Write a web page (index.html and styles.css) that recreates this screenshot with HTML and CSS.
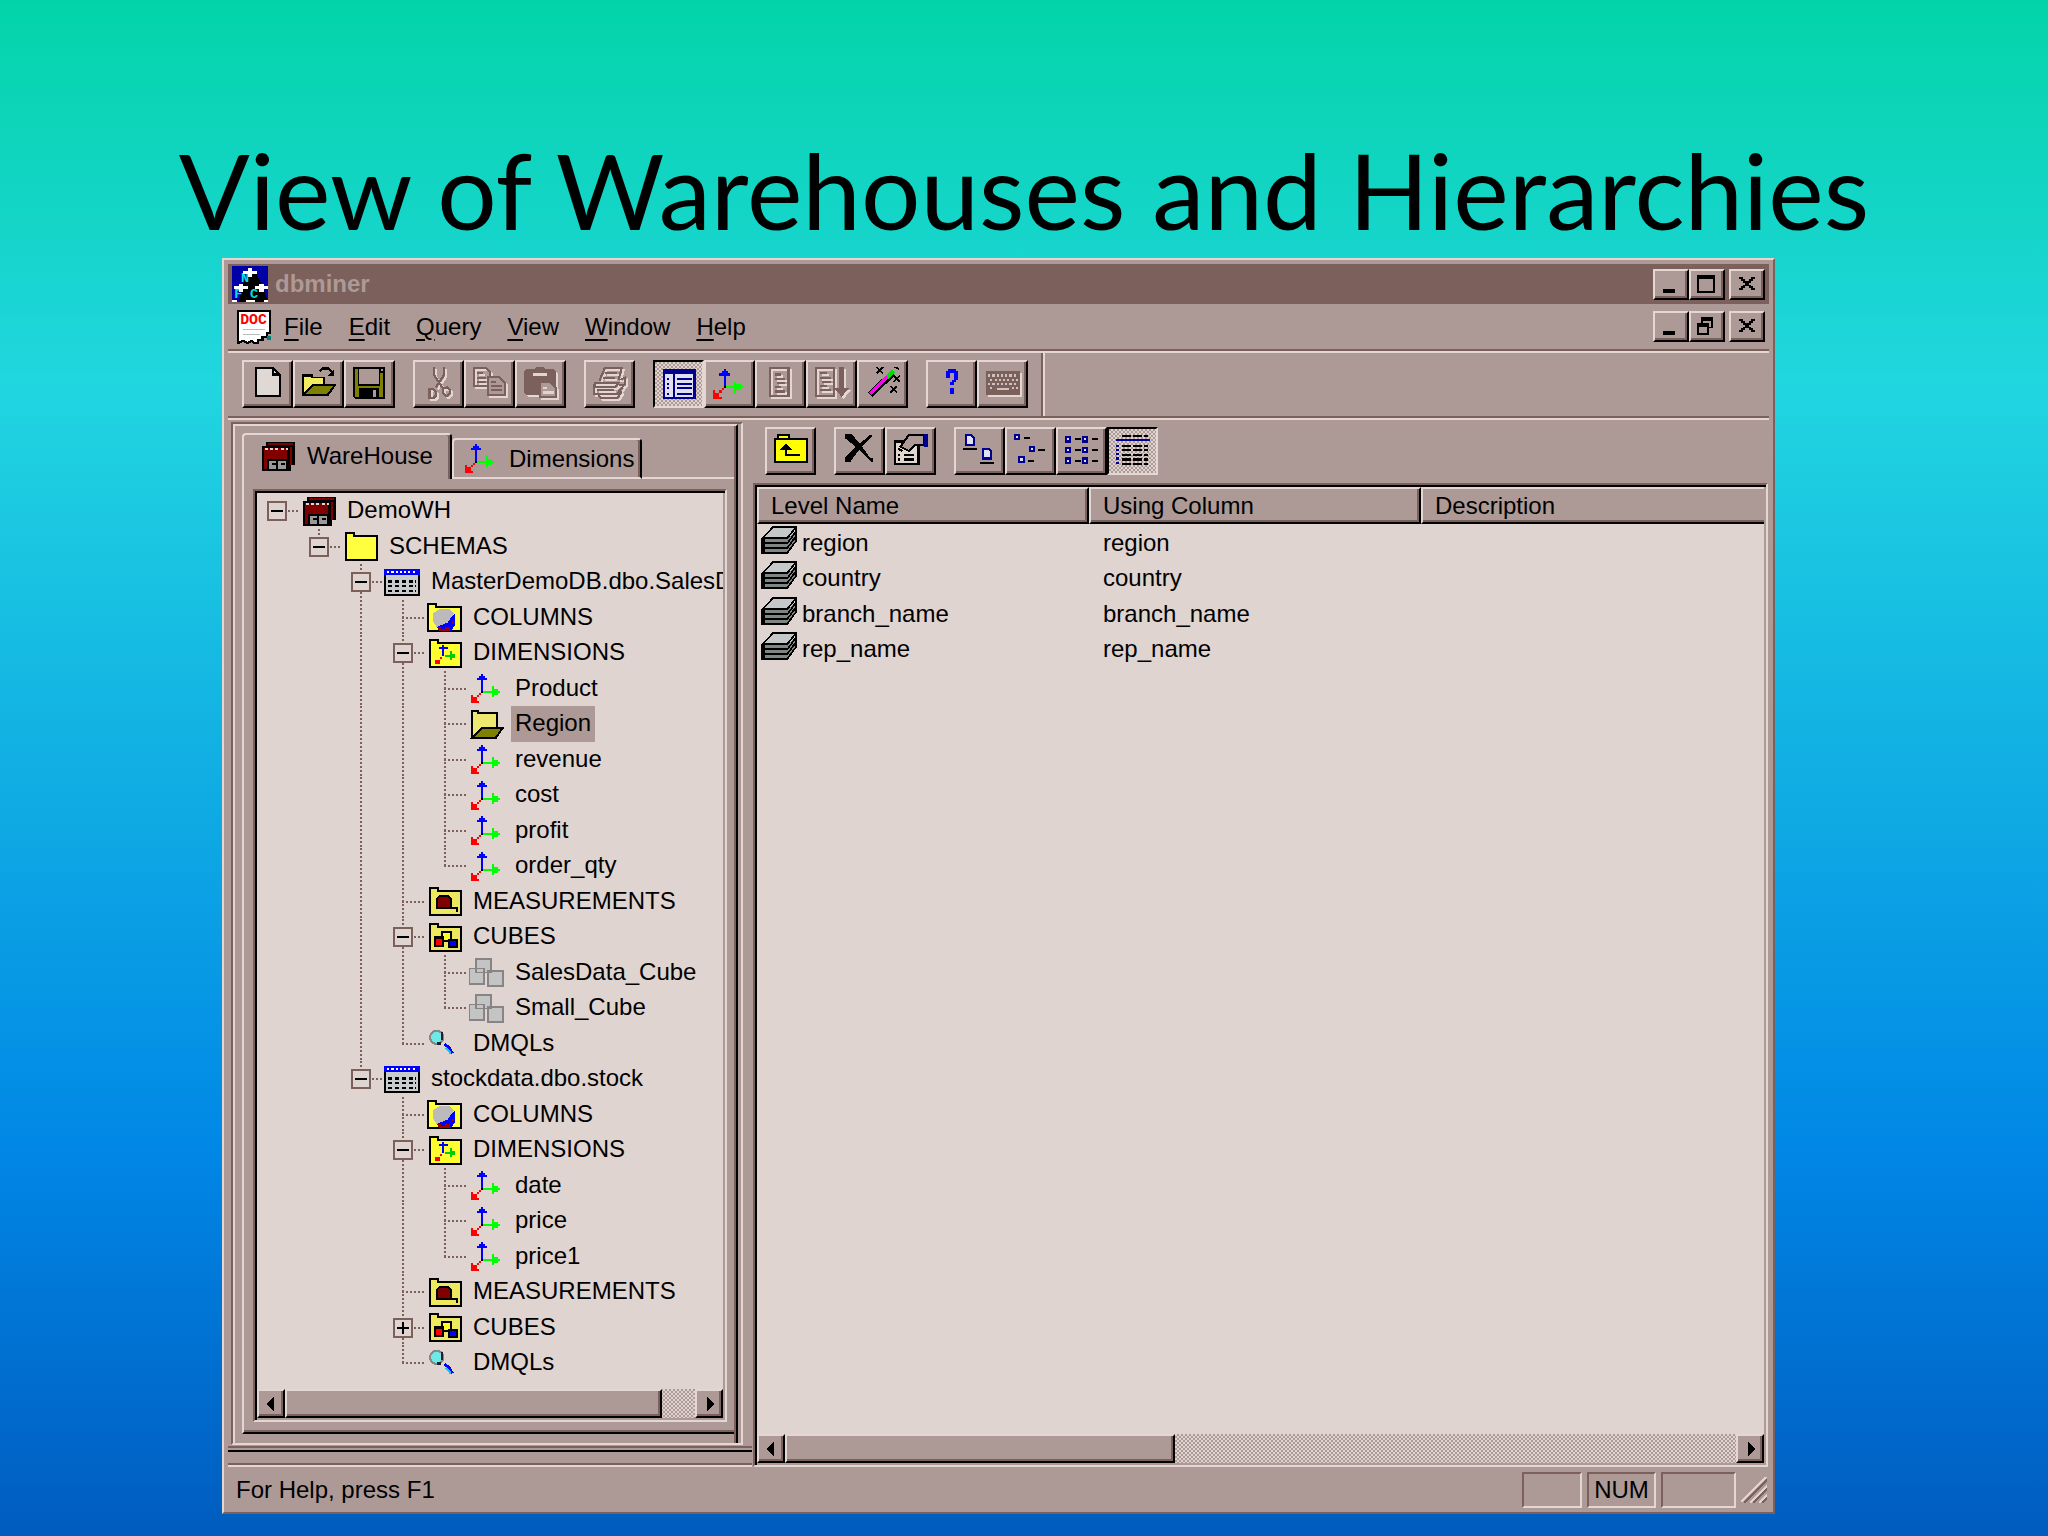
FILE: index.html
```html
<!DOCTYPE html>
<html lang="en">
<head>
<meta charset="utf-8">
<title>View of Warehouses and Hierarchies</title>
<link rel="stylesheet" href="styles.css">
</head>
<body>
<svg class="defs" aria-hidden="true">
  <symbol id="axes" viewBox="0 0 16 14" preserveAspectRatio="xMaxYMid"><path fill="#00f" d="M5 2h1v6H5zM4 1h3v1H4zM3 2h5v1H3zM5 0h1v1H5z"/><path fill="#0f0" d="M6 8h4v1H6zM10 6h1v5h-1zM11 7h2v3h-2zM13 8h1v1h-1z"/><path fill="#f00" d="M4 9h1v1H4zM3 10h1v1H3zM2 11h1v1H2zM0 10h1v3h3v1H0zM1 11h1v2H1zM2 12h1v1H2z"/><path d="M5 8h1v1H5z"/></symbol>
  <symbol id="house" viewBox="0 0 16 14" preserveAspectRatio="xMaxYMid"><path d="M2 0h14v11h-2v3H0V2h2z"/><path fill="#800000" d="M3 .7h12v.6H3zM1 3h11v5H1zM1 8h1.500v5H1zM13.500 2.500h1V11h-1z"/><path stroke="#e0d4d0" stroke-dasharray="1.500 1" d="M1.500 3.500h11"/><path fill="#999" d="M3.500 9h3.500v4H3.500zM8 9h3.500v4H8z"/><path d="M5 10h2v1H5zM9 10h2v1H9z"/></symbol>
  <symbol id="folder" viewBox="0 0 16 14" preserveAspectRatio="xMaxYMid"><path d="M.5 13.500V.5h4v1.500h11v11.500z" fill="#ffff40" stroke="#000"/></symbol>
  <symbol id="table" viewBox="0 0 17 13" preserveAspectRatio="xMaxYMid"><path d="M.5 1v11.500h16V1z" fill="#c8cccc" stroke="#000"/><path fill="#00f" d="M0 0h17v3H0z"/><path stroke="#fff" stroke-dasharray="1 1" d="M1.500 1.500h14"/><path stroke="#000" stroke-dasharray="2 1.200" d="M2 6h13M2 8.300h13M2 10.600h13"/></symbol>
  <symbol id="columns" viewBox="0 0 17 14" preserveAspectRatio="xMaxYMid"><path d="M.5 13.500V.5h4v1.500h12v11.500z" fill="#ffff40" stroke="#000"/><path fill="#bbb" d="M3 5l3-2h5l2 2-1 3-3 3-4 1-2-3z"/><path fill="#00f" d="M13.500 5v6l-2 2.500H6l-1-2 5-2 2-3z"/><path fill="#900" d="M5 11.500h2v1h2v-1h2v2H6zM12 9h1v1h-1z"/></symbol>
  <symbol id="dims" viewBox="0 0 16 14" preserveAspectRatio="xMaxYMid"><path d="M.5 13.500V.5h4v1.500h11v11.500z" fill="#ffff30" stroke="#000"/><path fill="#00f" d="M6.500 3h1v5h-1zM5 4h4v1H5z"/><path fill="#0c0" d="M8 7.500h3v1H8zM10 6h1v4h-1zM11 7h1.500v2H11z"/><path fill="#f00" d="M5.500 8.500h1v1h-1zM3 10h2.500v2H3z"/></symbol>
  <symbol id="measures" viewBox="0 0 16 14" preserveAspectRatio="xMaxYMid"><path d="M.5 13.500V.5h4v1.500h11v11.500z" fill="#ede860" stroke="#000"/><path fill="#800000" stroke="#000" d="M4 10V5.500l1-1h4.500l1 1V10z"/><path fill="none" stroke="#000" d="M4 10.300h9.500v1.700"/></symbol>
  <symbol id="cubes" viewBox="0 0 16 14" preserveAspectRatio="xMaxYMid"><path d="M.5 13.500V.5h4v1.500h11v11.500z" fill="#ede860" stroke="#000"/><g stroke="#000"><path fill="#ffff20" d="M6.500 4.500h4v4h-4z"/><path fill="#f00" d="M3 7h4v4H3z"/><path fill="#00f" d="M9.500 8h4v3.500h-4z"/></g></symbol>
  <symbol id="cube" viewBox="0 0 16 13" preserveAspectRatio="xMaxYMid"><g fill="#c4c4c4" stroke="#868484" stroke-width=".8"><path d="M3.500.5h6.500v6H3.500zM.5 4.700h6.600v7H.5zM8.800 5.800h6.700v6.700H8.800z"/></g></symbol>
  <symbol id="query" viewBox="0 0 16 14" preserveAspectRatio="xMaxYMid"><circle cx="3.800" cy="4" r="3.200" fill="#70e8e8" stroke="#888"/><path fill="#222" d="M6 1.500h1v4H6zM4 6.500h2v1H4z"/><path stroke="#00f" stroke-width="1.500" fill="none" d="M7.500 7.500l2 1.300 1.800 3"/><path stroke="#0cf" fill="none" d="M8 9l2 2v1"/></symbol>
  <symbol id="openfolder" viewBox="0 0 16 14" preserveAspectRatio="xMaxYMid"><path fill="#ede870" stroke="#000" d="M.5 13.500V.5h3v1h9v7H6L2 13"/><path fill="#808000" stroke="#000" d="M.5 13.500L5.500 8.500h10l-3.500 5z"/></symbol>
  <symbol id="stack" viewBox="0 0 17 13"><path fill="#808684" d="M.5 6h12l4-4v5l-4 5.500H.5z"/><path fill="#c4c8c8" stroke="#000" stroke-width=".8" d="M1 5.500L5.500.5h11L12.500 5.500z"/><path fill="none" stroke="#000" stroke-width=".8" d="M.5 5.500v7M0 8h12.500l4-5.500M0 10.200h12.500l4-5.500M0 12.500h12.500l4-5.500V.5M1.500 5v7"/></symbol>
  <symbol id="min" viewBox="0 0 16 14"><path d="M4 9.500h6v2H4z"/></symbol>
  <symbol id="max" viewBox="0 0 16 14"><path d="M3 2h9v9.500H3zM4 4v6.500h7V4z" fill-rule="evenodd"/></symbol>
  <symbol id="restore" viewBox="0 0 16 14"><path d="M5 2h6v6H9V7h1V4H6v1H5zM3 5h6v6.500H3zM4 7v3.500h4V7z" fill-rule="evenodd"/></symbol>
  <symbol id="close" viewBox="0 0 16 14"><path d="M4 3h2v1h1v1h2V4h1V3h2v1h-1v1h-1v1H9v1h1v1h1v1h1v1h-2V9H9V8H7v1H6v1H4V9h1V8h1V7h1V6H6V5H5V4H4z"/></symbol>
</svg>
<main class="slide">
  <h1 class="headline">View of Warehouses and Hierarchies</h1>
  <section class="window" aria-label="dbminer">
    <header class="titlebar">
      <svg class="app-icon" viewBox="0 0 16 16"><path fill="#0000a8" d="M0 0h16v16H0z"/><path d="M7 2h3l2 4 2 4 2 6H3l1-5 1-3z"/><g class="app-letters"><text x="4" y="7">N</text><text x="1" y="14">F</text><text x="8" y="14">C</text></g><path fill="#fff" d="M7 1h2v1h2v1.500H9V5H7V3.500H5V2h2zM3 8h2v1h2v1H5v1.500H3V10H1V9h2zM12 8h2v1h2v1h-2v1.500h-2V10h-2V9h2zM0 15h2v1H0zM6 15h4v1H6zM14 15h2v1h-2z"/></svg>
      <span class="caption">dbminer</span>
      <div class="controls">
        <button class="btn" aria-label="Minimize"><svg><use href="#min"/></svg></button><button class="btn" aria-label="Maximize"><svg><use href="#max"/></svg></button><button class="btn apart" aria-label="Close"><svg><use href="#close"/></svg></button>
      </div>
    </header>
    <nav class="menubar">
      <svg class="doc-icon" viewBox="0 0 16 16"><path fill="#fff" stroke="#000" d="M.5 15.500V.5h15V11H14v1.500h-2V14h-2v1.500H8l-1-1-2 1-2-1z"/><path fill="#008080" d="M14 12h2v2h-2z"/><path stroke="#bbb" stroke-width=".5" d="M3 9h10M3 11.500h8"/><text x="1.500" y="6.500">DOC</text></svg>
      <button><u>F</u>ile</button><button><u>E</u>dit</button><button><u>Q</u>uery</button><button><u>V</u>iew</button><button><u>W</u>indow</button><button><u>H</u>elp</button>
      <div class="controls">
        <button class="btn" aria-label="Minimize document"><svg><use href="#min"/></svg></button><button class="btn" aria-label="Restore document"><svg><use href="#restore"/></svg></button><button class="btn apart" aria-label="Close document"><svg><use href="#close"/></svg></button>
      </div>
    </nav>
    <div class="toolbar main-tools">
      <div class="group">
        <button class="btn" aria-label="New"><svg viewBox="0 0 16 16"><path fill="#e0d8d4" stroke="#000" d="M2.500.5h8l3 3v10h-11z"/><path fill="none" stroke="#000" d="M10.500.5v3h3"/></svg></button>
        <button class="btn" aria-label="Open"><svg viewBox="0 0 16 16"><path fill="#f4ec60" stroke="#000" d="M.5 13V4h4v1h6v3"/><path fill="#f4ec60" d="M1 5h9v3H5l-4 4z"/><path fill="#808000" stroke="#000" d="M.5 13.300L5 8.500h10.500L12 13.300z"/><path fill="none" stroke="#000" d="M8.500 2l1-1.300h3L14 2.500"/><path d="M15 1v3h-3z"/></svg></button>
        <button class="btn" aria-label="Save"><svg viewBox="0 0 16 16"><path d="M0 0h15v15H1l-1-1z"/><path fill="#808000" d="M1 1h1.500v8h10V3H14v11H1z"/><path fill="#ad9a96" d="M3 1h9v7H3z"/><path d="M3 10h9v4.500H3z"/><path fill="#ad9a96" d="M9.500 11H11v3H9.500zM13 1h1v1h-1z"/></svg></button>
      </div>
      <div class="group">
        <button class="btn off" aria-label="Cut"><svg viewBox="0 0 16 16"><path fill="none" stroke="#7b605b" d="M5.500 0v3.500l4 6M10.500 0v3.500l-4 6M3.500 10.500h2l1 1v2l-1 1h-2zM10 10l2-.5 1 1v2l-1 1h-1l-1-1z"/></svg></button>
        <button class="btn off" aria-label="Copy"><svg viewBox="0 0 16 16"><path fill="none" stroke="#7b605b" d="M.5.500h5.500l2 2v6.500H.5zM2 3h2.500M2 5h4M2 7h4"/><path fill="#ad9a96" stroke="#7b605b" d="M7 4.500h5l3 3V13H7z"/><path fill="none" stroke="#7b605b" d="M8.500 7h2.500M8.500 9h5M8.500 11h5"/></svg></button>
        <button class="btn off" aria-label="Paste"><svg viewBox="0 0 16 16"><path fill="#7b605b" d="M0 2l1-1h4l1-1h3l1 1h4l1 1v11H1l-1-1z"/><path fill="#ad9a96" stroke="#7b605b" d="M7.500 7h4.500l3 3v4H7.500z"/><path stroke="#e0d4d0" d="M4 3.500h7M9 10h2M9 12h5"/></svg></button>
      </div>
      <div class="group">
        <button class="btn off" aria-label="Print"><svg viewBox="0 0 16 16"><path fill="none" stroke="#7b605b" d="M3 6.500L5.500.500h8l-1.500 5.500M5.500 3h6M4.500 5h6M1 7.500h11l-1.500 2H1zM.5 8v4.500h11L15 8V5l-2 1M2.500 13l1 1.500h8l2-3M2 11h8M12 8.500h3"/></svg></button>
      </div>
      <div class="group">
        <button class="btn on" aria-label="Warehouse view" aria-pressed="true"><svg viewBox="0 0 16 16"><path fill="#e0e0f0" stroke="#000090" d="M.8 1.500h14.500v13H.8z"/><path fill="#000090" d="M1 1h14v2.500H1zM5 3h1v11H5z"/><path stroke="#000090" d="M7 5.500h7M7 8h7M7 10h7M7 12.500h7M2.500 5.500h1M2.500 8h1M2.500 10h1M2.500 12.500h1"/></svg></button>
        <button class="btn" aria-label="Dimensions"><svg><use href="#axes"/></svg></button>
        <button class="btn off" aria-label="Report"><svg viewBox="0 0 16 16"><path fill="none" stroke="#7b605b" d="M3 .5h8.500v13H3zM5 3.500h3M5 5.500h5M6 7.500h4M5 9.500h3M5 11.500h5"/></svg></button>
        <button class="btn off" aria-label="Sort"><svg viewBox="0 0 16 16"><path fill="none" stroke="#7b605b" d="M.5.500h8.500v13H.5zM2.500 3h3M2.500 5h5M3.500 7h4M2.500 9h3M2.500 11h5"/><path fill="#7b605b" d="M11.500 0h2v10h2.500L12.500 14 9 10h2.500z"/></svg></button>
        <button class="btn" aria-label="Wizard"><svg viewBox="0 0 16 16"><path stroke="#000" stroke-width="3" d="M2 13L12.500 3"/><path stroke="#f0f" stroke-width="1.600" d="M2 12.700L10 4.500"/><path stroke="#0d0" stroke-width="2" d="M10 4.800L13 2"/><path stroke="#000" stroke-width=".8" d="M5 0l3 3M8 0L5 3M13 4l3 3M16 4l-3 3M11.500 9l3 3M14.500 9l-3 3M13.500 0l2 1"/></svg></button>
      </div>
      <div class="group">
        <button class="btn" aria-label="Help"><svg viewBox="0 0 16 16"><path fill="#00f" d="M5 2h1V1h4v1h1v4h-1v1H9v1.500H7V7h1V6h1V3H7v2H5zM7 10h2v2.500H7z"/></svg></button>
        <button class="btn off" aria-label="Keyboard"><svg viewBox="0 0 16 16"><path fill="#7b605b" d="M0 2h16v11H0z"/><path stroke="#cfc2be" stroke-dasharray="1 1" d="M1 4h14M2 6h13M1 8h14M2 10h2M12 10h3"/><path stroke="#cfc2be" d="M5 10.500h6"/></svg></button>
      </div>
      <div class="divider"></div>
    </div>
    <div class="body">
      <aside class="dock">
        <div class="dock-edge"><div class="dock-inner">
          <div class="tabs" role="tablist">
            <button class="tab active" role="tab" aria-selected="true"><svg><use href="#house"/></svg>WareHouse</button>
            <button class="tab" role="tab" aria-selected="false"><svg><use href="#axes"/></svg>Dimensions</button>
            <span class="tab-rest"></span>
          </div>
          <div class="page">
            <div class="well">
              <ul class="tree">
                <li><i class="g h"><button class="exp" aria-label="Collapse"></button></i><svg><use href="#house"/></svg><span>DemoWH</span></li>
                <li><i class="g"></i><i class="g l"><button class="exp" aria-label="Collapse"></button></i><svg><use href="#folder"/></svg><span>SCHEMAS</span></li>
                <li><i class="g"></i><i class="g"></i><i class="g t"><button class="exp" aria-label="Collapse"></button></i><svg><use href="#table"/></svg><span>MasterDemoDB.dbo.SalesD</span></li>
                <li><i class="g"></i><i class="g"></i><i class="g v"></i><i class="g t"></i><svg><use href="#columns"/></svg><span>COLUMNS</span></li>
                <li><i class="g"></i><i class="g"></i><i class="g v"></i><i class="g t"><button class="exp" aria-label="Collapse"></button></i><svg><use href="#dims"/></svg><span>DIMENSIONS</span></li>
                <li><i class="g"></i><i class="g"></i><i class="g v"></i><i class="g v"></i><i class="g t"></i><svg><use href="#axes"/></svg><span>Product</span></li>
                <li><i class="g"></i><i class="g"></i><i class="g v"></i><i class="g v"></i><i class="g t"></i><svg><use href="#openfolder"/></svg><span class="selected">Region</span></li>
                <li><i class="g"></i><i class="g"></i><i class="g v"></i><i class="g v"></i><i class="g t"></i><svg><use href="#axes"/></svg><span>revenue</span></li>
                <li><i class="g"></i><i class="g"></i><i class="g v"></i><i class="g v"></i><i class="g t"></i><svg><use href="#axes"/></svg><span>cost</span></li>
                <li><i class="g"></i><i class="g"></i><i class="g v"></i><i class="g v"></i><i class="g t"></i><svg><use href="#axes"/></svg><span>profit</span></li>
                <li><i class="g"></i><i class="g"></i><i class="g v"></i><i class="g v"></i><i class="g l"></i><svg><use href="#axes"/></svg><span>order_qty</span></li>
                <li><i class="g"></i><i class="g"></i><i class="g v"></i><i class="g t"></i><svg><use href="#measures"/></svg><span>MEASUREMENTS</span></li>
                <li><i class="g"></i><i class="g"></i><i class="g v"></i><i class="g t"><button class="exp" aria-label="Collapse"></button></i><svg><use href="#cubes"/></svg><span>CUBES</span></li>
                <li><i class="g"></i><i class="g"></i><i class="g v"></i><i class="g v"></i><i class="g t"></i><svg><use href="#cube"/></svg><span>SalesData_Cube</span></li>
                <li><i class="g"></i><i class="g"></i><i class="g v"></i><i class="g v"></i><i class="g l"></i><svg><use href="#cube"/></svg><span>Small_Cube</span></li>
                <li><i class="g"></i><i class="g"></i><i class="g v"></i><i class="g l"></i><svg><use href="#query"/></svg><span>DMQLs</span></li>
                <li><i class="g"></i><i class="g"></i><i class="g l"><button class="exp" aria-label="Collapse"></button></i><svg><use href="#table"/></svg><span>stockdata.dbo.stock</span></li>
                <li><i class="g"></i><i class="g"></i><i class="g"></i><i class="g t"></i><svg><use href="#columns"/></svg><span>COLUMNS</span></li>
                <li><i class="g"></i><i class="g"></i><i class="g"></i><i class="g t"><button class="exp" aria-label="Collapse"></button></i><svg><use href="#dims"/></svg><span>DIMENSIONS</span></li>
                <li><i class="g"></i><i class="g"></i><i class="g"></i><i class="g v"></i><i class="g t"></i><svg><use href="#axes"/></svg><span>date</span></li>
                <li><i class="g"></i><i class="g"></i><i class="g"></i><i class="g v"></i><i class="g t"></i><svg><use href="#axes"/></svg><span>price</span></li>
                <li><i class="g"></i><i class="g"></i><i class="g"></i><i class="g v"></i><i class="g l"></i><svg><use href="#axes"/></svg><span>price1</span></li>
                <li><i class="g"></i><i class="g"></i><i class="g"></i><i class="g t"></i><svg><use href="#measures"/></svg><span>MEASUREMENTS</span></li>
                <li><i class="g"></i><i class="g"></i><i class="g"></i><i class="g t"><button class="exp plus" aria-label="Expand"></button></i><svg><use href="#cubes"/></svg><span>CUBES</span></li>
                <li><i class="g"></i><i class="g"></i><i class="g"></i><i class="g l"></i><svg><use href="#query"/></svg><span>DMQLs</span></li>
              </ul>
              <div class="scroll">
                <button class="btn" aria-label="Scroll left"><svg viewBox="0 0 8 8"><path d="M5 1v6L2 4z"/></svg></button>
                <div class="track"><div class="btn thumb tree-thumb"></div></div>
                <button class="btn" aria-label="Scroll right"><svg viewBox="0 0 8 8"><path d="M3 1v6l3-3z"/></svg></button>
              </div>
            </div>
          </div>
        </div></div>
      </aside>
      <section class="content">
        <div class="toolbar list-tools">
          <div class="group">
            <button class="btn" aria-label="Up one level"><svg viewBox="0 0 16 16"><path fill="#ff0" stroke="#000" d="M.5 13V2.500h1.500v-2h5v2h8.500V13z"/><path fill="none" stroke="#000" stroke-width=".8" d="M2 2.500h5"/><path d="M5.500 4.500L8.500 7.500h-6z"/><path fill="none" stroke="#000" d="M5.500 6v4h6.500"/></svg></button>
          </div>
          <div class="group">
            <button class="btn" aria-label="Delete"><svg viewBox="0 0 16 16"><path d="M1 0h3l4 4.500L12.500.500h1v1L9 6l4 5.500h1v1.500h-1L7.500 7.500 3.500 13H1v-2l5-5-5-4z"/></svg></button>
            <button class="btn" aria-label="Properties"><svg viewBox="0 0 16 16"><path fill="#e0d8d0" stroke="#000" d="M.5 3.500h11V14H.5z"/><path fill="#ad9a96" stroke="#000" d="M3 6l4-5.500h7v4.500h-4L7 8z"/><path fill="#000090" d="M14 0h2v6h-2z"/><path stroke="#000" d="M2 10h1M2 12h1M4.500 10h5M4.500 12h5M2 7l2 1"/></svg></button>
          </div>
          <div class="group">
            <button class="btn" aria-label="Large icons"><svg viewBox="0 0 16 16"><path fill="#e0e0f0" stroke="#000090" d="M1.500.5H4l1 1V5H1.500zM9.500 7H12l1 1v3.500H9.500z"/><path stroke="#000" d="M0 7h6.500M8 13.500h6.500"/></svg></button>
            <button class="btn" aria-label="Small icons"><svg viewBox="0 0 16 16"><path fill="#e0e0f0" stroke="#000090" d="M.5.500h2v2h-2zM7.500 6h2v2h-2zM2.500 11h2v2h-2z"/><path stroke="#000" d="M4.500 2h3M11.500 7.500h3M6.500 12.500h3"/></svg></button>
            <button class="btn" aria-label="List"><svg viewBox="0 0 16 16"><path fill="#e0e0f0" stroke="#000090" d="M.5 1.500h2v2h-2zM.5 6.500h2v2h-2zM.5 11.500h2v2h-2zM8.500 1.500h2v2h-2zM8.500 6.500h2v2h-2zM8.500 11.500h2v2h-2z"/><path stroke="#000" d="M4.500 2.500h3M4.500 7.500h3M4.500 12.500h3M12.500 2.500h3M12.500 7.500h3M12.500 12.500h3"/></svg></button>
            <button class="btn on" aria-label="Details" aria-pressed="true"><svg viewBox="0 0 16 16"><path stroke="#000" stroke-dasharray="4 1" d="M3 1h12M3 5.500h12M3 7.700h12M3 9.800h12M3 12h12M3 14h12"/><path stroke="#000090" stroke-width="1" d="M0 3h16"/><path stroke="#000090" stroke-width="1.500" stroke-dasharray="1 1" d="M.8 5v9"/></svg></button>
          </div>
        </div>
        <div class="list">
          <div class="list-body">
            <table>
              <thead><tr><th class="name">Level Name</th><th class="using">Using Column</th><th>Description</th></tr></thead>
              <tbody>
                <tr><td><svg><use href="#stack"/></svg>region</td><td>region</td><td></td></tr>
                <tr><td><svg><use href="#stack"/></svg>country</td><td>country</td><td></td></tr>
                <tr><td><svg><use href="#stack"/></svg>branch_name</td><td>branch_name</td><td></td></tr>
                <tr><td><svg><use href="#stack"/></svg>rep_name</td><td>rep_name</td><td></td></tr>
              </tbody>
            </table>
          </div>
          <div class="scroll">
            <button class="btn" aria-label="Scroll left"><svg viewBox="0 0 8 8"><path d="M5 1v6L2 4z"/></svg></button>
            <div class="track"><div class="btn thumb list-thumb"></div></div>
            <button class="btn" aria-label="Scroll right"><svg viewBox="0 0 8 8"><path d="M3 1v6l3-3z"/></svg></button>
          </div>
        </div>
      </section>
    </div>
    <footer class="status">
      <span class="hint">For Help, press F1</span>
      <span class="cell caps"></span><span class="cell num">NUM</span><span class="cell scrl"></span>
      <svg class="grip" viewBox="0 0 26 26"><g stroke-width="2"><path stroke="#e0d4d0" d="M0 25L25 0M9 26L26 9M18 26l8-8"/><path stroke="#7b605b" d="M3 26L26 3M12 26l14-14M21 26l5-5"/></g></svg>
    </footer>
  </section>
</main>
</body>
</html>
```
FILE: styles.css
```css
:root {
  --face: #ad9a96;
  --light: #e4d6d3;
  --dark: #7b605b;
  --paper: #e0d4d0;
  --dither: repeating-conic-gradient(#e0d4d0 0 25%, #ad9a96 0 50%) 0 0 / 4px 4px;
}
*, *::after { box-sizing: border-box; }
body { margin: 0; font: 24px/34px "Liberation Sans", Arial, sans-serif; color: #000; }
button { font: inherit; color: inherit; background: none; border: 0; padding: 0; }
svg { display: block; flex: none; shape-rendering: crispEdges; }
.defs { position: absolute; width: 0; height: 0; }

.slide {
  min-height: 100vh; display: flex; flex-direction: column; padding: 0 273px 22px 222px;
  background: linear-gradient(#03d4a8, #21d6e0 25%, #0087e6 75%, #005cbf);
}
.headline {
  margin: 0 -273px 0 -222px; padding-top: 124px; height: 258px; text-align: center; white-space: nowrap;
  font: 400 105px/130px Lato, sans-serif;
}
.window {
  flex: 1; display: flex; flex-direction: column; background: var(--face);
  border: 2px solid; border-color: var(--light) var(--dark) var(--dark) var(--light); padding: 4px 4px 0;
}

.btn {
  display: flex; align-items: center; justify-content: center; background: var(--face);
  border: 2px solid; border-color: var(--light) #000 #000 var(--light);
  box-shadow: inset -2px -2px 0 var(--dark);
}
.btn.on { background: var(--dither); border-color: #000 var(--light) var(--light) #000; box-shadow: none; }
.btn.off svg { filter: drop-shadow(2px 2px 0 var(--light)); }

.titlebar, .menubar { display: flex; align-items: center; flex: none; }
.titlebar { height: 40px; background: #7c605b; padding: 0 4px; }
.app-icon { width: 36px; height: 36px; }
.app-letters { font: bold 6px "Liberation Mono", monospace; fill: #00e0e8; }
.caption { margin-left: 7px; font: bold 24px/34px "Liberation Sans", Arial, sans-serif; color: var(--face); }
.menubar { height: 45px; padding: 0 4px 0 9px; }
.doc-icon { width: 34px; height: 34px; }
.doc-icon text { font: bold 7px "Liberation Mono", monospace; fill: #f00; }
.menubar > button { padding: 0 13px; }
u { text-underline-offset: 4px; text-decoration-thickness: 2px; }
.controls { margin-left: auto; display: flex; }
.controls .btn { width: 36px; height: 31px; }
.controls .apart { margin-left: 4px; }
.controls svg { width: 32px; height: 27px; }

.toolbar { display: flex; gap: 18px; flex: none; }
.toolbar .group { display: flex; }
.toolbar .btn { width: 51px; height: 48px; }
.toolbar svg { width: 34px; height: 34px; }
.main-tools {
  height: 69px; padding: 9px 0 0 14px; margin-bottom: 2px;
  border: solid var(--dark); border-width: 2px 0;
  box-shadow: inset 0 2px 0 var(--light), 0 2px 0 var(--light);
}
.divider { border-left: 2px solid var(--dark); border-right: 2px solid var(--light); margin: -7px 0 0 -5px; }

.body { flex: 1; display: flex; }
.dock {
  width: 524px; flex: none; display: flex; flex-direction: column; padding: 2px 9px 0 3px;
  border-bottom: 2px solid var(--light); box-shadow: inset 0 -2px 0 var(--dark);
}
.dock::after {
  content: ""; height: 6px; margin: 1px -9px 13px -3px; border-top: 2px solid var(--dark); border-bottom: 2px solid #000;
}
.dock-edge {
  flex: 1; display: flex; padding-right: 3px;
  border: 2px solid; border-color: var(--dark) var(--light) var(--light) var(--dark);
}
.dock-inner {
  flex: 1; min-width: 0; display: flex; flex-direction: column; padding: 7px 2px 9px 7px;
  border: 2px solid; border-color: var(--light) #000 transparent var(--light); border-bottom: 0;
  box-shadow: inset -2px 0 0 var(--dark);
}
.tabs { display: flex; align-items: flex-end; }
.tab {
  display: flex; align-items: center; height: 41px; border: 2px solid;
  border-color: var(--light) #000 var(--light) var(--light); border-radius: 4px 4px 0 0;
  box-shadow: inset -2px 0 0 var(--dark); width: 190px; padding-left: 10px; gap: 11px;
}
.tab.active { height: 46px; width: 210px; border-bottom: 0; padding: 0 0 2px 17px; gap: 12px; }
.tab svg { width: 34px; height: 29px; }
.tab-rest { flex: 1; border-bottom: 2px solid var(--light); }
.page {
  flex: 1; display: flex; padding: 10px 7px 10px 9px; border-left: 2px solid var(--light);
  border-bottom: 2px solid #000; box-shadow: inset 0 -2px 0 var(--dark);
}
.well, .list {
  flex: 1; min-width: 0; display: flex; flex-direction: column; padding: 2px;
  border: 2px solid; border-color: var(--dark) var(--light) var(--light) var(--dark);
  box-shadow: inset 2px 2px 0 #000, inset -2px -2px 0 var(--face); background: var(--paper);
}
.tree { flex: 1; list-style: none; margin: 0; padding: 0 0 8px; overflow: hidden; white-space: nowrap; }
.tree li { display: flex; align-items: center; height: 35px; }
.tree li:nth-child(odd) { height: 36px; }
.tree li > svg { width: 36px; height: 29px; margin: 0 7px 0 1px; }
.tree li > span { padding: 0 4px; align-self: stretch; }
.tree .selected { background: var(--face); }
.g {
  --y: repeating-linear-gradient(to bottom, var(--dark) 0 2px, transparent 2px 4px) 19px 0;
  --x: repeating-linear-gradient(to right, var(--dark) 0 2px, transparent 2px 4px) 19px 17px / 23px 2px no-repeat;
  flex: none; width: 42px; align-self: stretch; display: flex; align-items: center; padding-left: 10px;
}
.h { background: var(--x); }
.v { background: var(--y) / 2px 100% no-repeat; }
.t { background: var(--x), var(--y) / 2px 100% no-repeat; }
.l { background: var(--x), var(--y) / 2px 18px no-repeat; }
.exp {
  width: 20px; height: 20px; border: 2px solid var(--dark);
  background: linear-gradient(#000, #000) center / 12px 2px no-repeat, var(--paper);
}
.exp.plus { background: linear-gradient(#000, #000) center / 12px 2px no-repeat, linear-gradient(#000, #000) center / 2px 12px no-repeat, var(--paper); }

.scroll { display: flex; height: 29px; flex: none; }
.scroll .btn { width: 28px; flex: none; }
.scroll svg { width: 20px; height: 20px; }
.track { flex: 1; display: flex; background: var(--dither); }
.scroll .tree-thumb { width: 92%; }
.scroll .list-thumb { width: 41%; }

.content { flex: 1; min-width: 0; display: flex; flex-direction: column; padding: 0 1px; }
.list-tools { height: 63px; padding: 7px 0 0 12px; }
.list-body { flex: 1; }
table { width: 100%; table-layout: fixed; border-collapse: separate; border-spacing: 0; }
th {
  height: 37px; padding: 0 0 0 12px; text-align: left; font-weight: 400; line-height: 32px; background: var(--face);
  border: 2px solid; border-color: var(--light) #000 #000 var(--light); box-shadow: inset -2px -2px 0 var(--dark);
}
th:last-child { border-right: 0; box-shadow: inset 0 -2px 0 var(--dark); }
.name, .using { width: 332px; }
td { padding: 0 0 0 14px; height: 35px; line-height: 35px; }
tr:nth-child(odd) td { height: 36px; }
td:first-child { padding-left: 4px; }
td svg { display: inline-block; width: 36px; height: 28px; vertical-align: -3px; margin-right: 5px; }

.status { display: flex; align-items: center; flex: none; height: 45px; padding: 0 2px 0 8px; gap: 5px; }
.hint { margin-right: auto; }
.cell { height: 36px; border: 2px solid; border-color: var(--dark) var(--light) var(--light) var(--dark); text-align: center; line-height: 32px; }
.caps { width: 60px; }
.num { width: 69px; }
.scrl { width: 75px; }
.grip { width: 26px; height: 26px; }
```
